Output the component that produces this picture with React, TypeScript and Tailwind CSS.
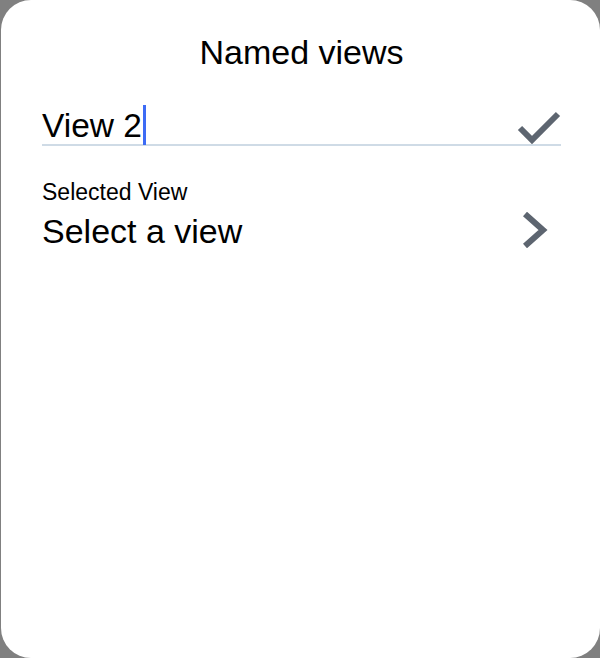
import React from "react";

export default function App() {
  return (
    <div className="w-[600px] h-[658px] bg-[#808080] pl-[1px] flex" style={{ fontFamily: '"Liberation Sans", Arial, sans-serif' }}>
      <div className="flex-1 bg-white rounded-[30px] flex flex-col px-[41px] pr-[39px] pt-[32px]">
        <h1 className="text-center text-[34px] leading-[40px] text-black">Named views</h1>
        <div className="mt-[32px] flex items-center border-b-2 border-[#cfdbe6] h-[42px]">
          <div className="flex-1 flex items-center h-full">
            <span className="text-[33.5px] leading-[40px] text-black mt-[3px]">View 2</span>
            <span className="w-[3px] h-[40px] bg-[#3d6bf5] ml-[1px] self-start mt-[1px]" />
          </div>
          <svg width="44" height="34" viewBox="0 0 44 34" className="mt-[6px]">
            <path d="M3 18 L15 30 L41 4" fill="none" stroke="#5d6570" strokeWidth="6" />
          </svg>
        </div>
        <div className="mt-[34px] flex items-center">
          <div className="flex-1 flex flex-col">
            <span className="text-[23px] leading-[24px] text-black">Selected View</span>
            <span className="mt-[7px] text-[34px] leading-[40px] text-black">Select a view</span>
          </div>
          <svg width="30" height="36" viewBox="0 0 30 36" className="mt-[28px] mr-[10px]">
            <path d="M4 2 L22 18 L4 34" fill="none" stroke="#5d6570" strokeWidth="6" />
          </svg>
        </div>
      </div>
    </div>
  );
}
